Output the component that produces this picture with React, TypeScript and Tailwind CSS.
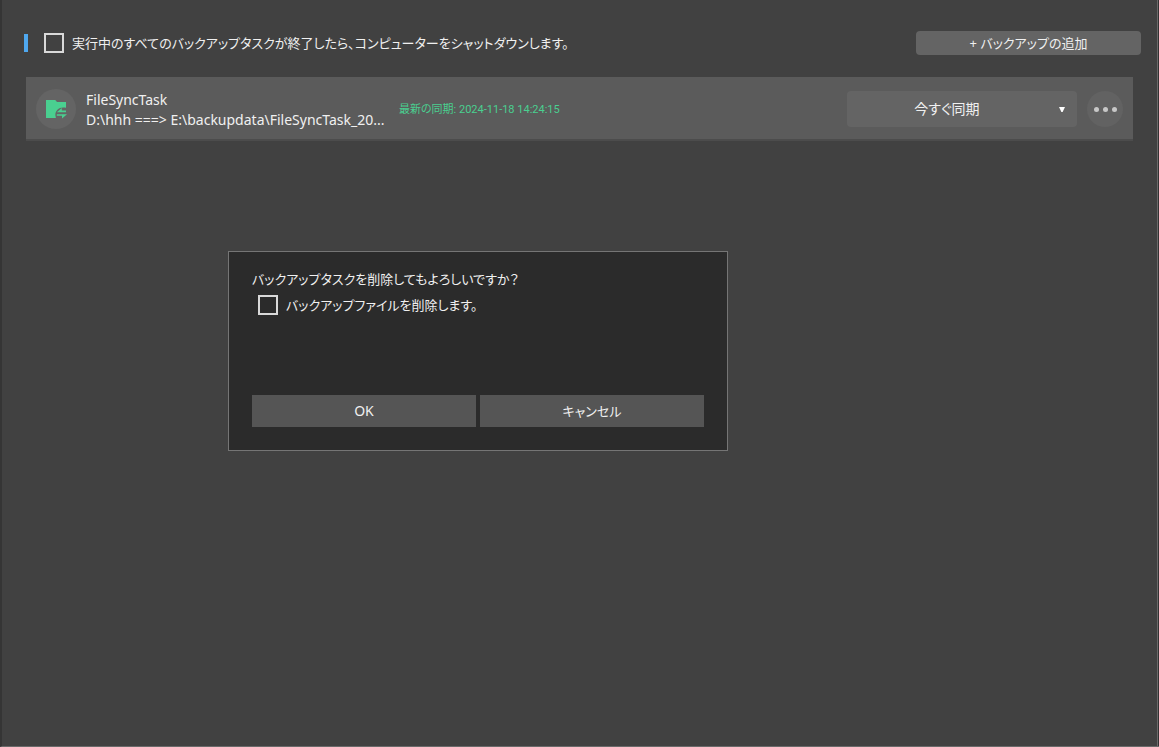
import React, { useState } from 'react';

const checkboxClass =
  'h-5 w-5 shrink-0 appearance-none border-2 border-[#d9d9d9] bg-transparent checked:bg-[#4fa8ef]';

const SyncFolderIcon = () => (
  <svg viewBox="0 0 22 20" className="h-5 w-[22px]" aria-hidden="true">
    <path d="M1 1h9.2l1.8 2h9v5.8c-6-1.6-11 2.2-10.6 7.6l.5 2.6H1z" fill="#4acf90" />
    <path d="M11.8 13.2l5-4.2v2.6H21v1.6z" fill="#4acf90" />
    <path d="M11.8 15.2H22l-5 4.2v-2.6h-5.2z" fill="#4acf90" />
  </svg>
);

const tasks = [
  {
    name: 'FileSyncTask',
    path: 'D:\\hhh ===> E:\\backupdata\\FileSyncTask_20...',
    lastSync: '最新の同期: 2024-11-18 14:24:15'
  }
];

const App = () => {
  const [shutdown, setShutdown] = useState(false);
  const [removeFiles, setRemoveFiles] = useState(false);
  const [dialogOpen, setDialogOpen] = useState(true);

  return (
    <div className="relative flex min-h-screen border-b border-l-2 border-b-[#6a6a6a] border-l-[#353535] bg-[#414141] font-['Noto_Sans','Noto_Sans_CJK_JP',sans-serif] text-sm leading-5 text-[#f0f0f0] [font-feature-settings:'palt']">
      <main className="min-w-0 flex-1">
        <header className="flex items-center pt-[31px] pr-4 pl-[22px]">
          <div className="h-[18px] w-1 bg-[#4fa8ef]" />
          <label className="ml-4 flex items-center gap-2 text-[13px] whitespace-nowrap">
            <input
              type="checkbox"
              checked={shutdown}
              onChange={(e) => setShutdown(e.target.checked)}
              className={checkboxClass}
            />
            実行中のすべてのバックアップタスクが終了したら、コンピューターをシャットダウンします。
          </label>
          <button
            type="button"
            className="ml-auto h-6 w-[225px] rounded bg-[#646464] text-[13px] hover:bg-[#707070]"
          >
            + バックアップの追加
          </button>
        </header>

        <ul className="mt-[22px] mr-6 ml-6">
          {tasks.map((task) => (
            <li
              key={task.name}
              className="flex h-16 items-center border-b-2 border-[#4c4c4c] bg-[#5b5b5b] px-2.5 pt-0.5"
            >
              <div className="flex h-10 w-10 shrink-0 items-center justify-center rounded-full bg-[#646464]">
                <SyncFolderIcon />
              </div>
              <div className="ml-2.5 w-[306px] shrink-0 pt-0.5 whitespace-nowrap">
                <p>{task.name}</p>
                <p>{task.path}</p>
              </div>
              <p className="ml-[7px] pt-0.5 font-['Roboto','Noto_Sans_CJK_JP',sans-serif] text-[11px] whitespace-nowrap text-[#4acf90]">
                {task.lastSync}
              </p>
              <div className="relative ml-auto">
                <select
                  aria-label={task.name}
                  className="block h-9 w-[230px] appearance-none rounded bg-[#646464] pr-[30px] text-center [text-align-last:center]"
                >
                  <option>今すぐ同期</option>
                </select>
                <svg
                  viewBox="0 0 6 5"
                  className="pointer-events-none absolute top-4 right-3 h-[5px] w-1.5"
                  aria-hidden="true"
                >
                  <path d="M0 0h6L3.6 5H2.4z" fill="#fff" />
                </svg>
              </div>
              <button
                type="button"
                aria-label="..."
                onClick={() => setDialogOpen(true)}
                className="ml-2.5 flex h-9 w-9 items-center justify-center gap-1 rounded-full bg-[#626262]"
              >
                <span className="h-[5px] w-[5px] rounded-full bg-[#c8c8c8]" />
                <span className="h-[5px] w-[5px] rounded-full bg-[#c8c8c8]" />
                <span className="h-[5px] w-[5px] rounded-full bg-[#c8c8c8]" />
              </button>
            </li>
          ))}
        </ul>
      </main>

      {/* right window edge */}
      <div className="w-0.5 border-l border-[#6a6a6a] bg-[#333333]" />

      {dialogOpen && (
        <div
          role="dialog"
          aria-labelledby="delete-title"
          className="absolute top-[251px] left-[226px] flex h-[200px] w-[500px] flex-col border border-[#757575] bg-[#2b2b2b] px-[23px] pt-[17px] pb-[23px] text-[13px]"
        >
          <h2 id="delete-title">バックアップタスクを削除してもよろしいですか？</h2>
          <label className="mt-1.5 flex items-center gap-2 pl-1.5">
            <input
              type="checkbox"
              checked={removeFiles}
              onChange={(e) => setRemoveFiles(e.target.checked)}
              className={checkboxClass}
            />
            バックアップファイルを削除します。
          </label>
          <div className="mt-auto grid grid-cols-2 gap-1">
            <button
              type="button"
              onClick={() => setDialogOpen(false)}
              className="h-8 bg-[#555555] text-sm hover:bg-[#606060]"
            >
              OK
            </button>
            <button
              type="button"
              onClick={() => setDialogOpen(false)}
              className="h-8 bg-[#555555] hover:bg-[#606060]"
            >
              キャンセル
            </button>
          </div>
        </div>
      )}
    </div>
  );
};

export default App;
